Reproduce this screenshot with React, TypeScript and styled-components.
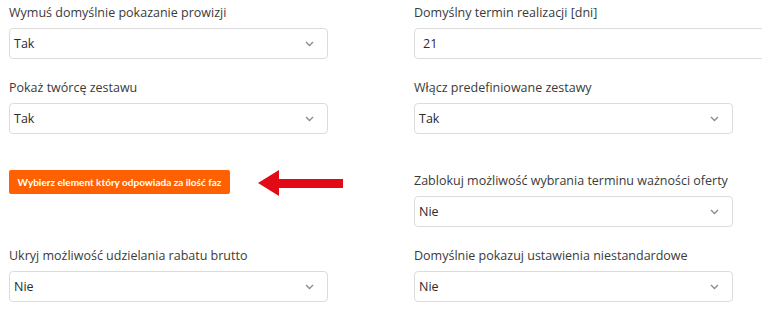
import styled, { createGlobalStyle } from 'styled-components';

const GlobalStyle = createGlobalStyle`
    body {
        margin: 0;
        background: #ffffff;
        font-family: "Open Sans", "Liberation Sans", sans-serif;
        color: #333333;
    }
`

const Page = styled.div`
    display: flex;
    flex-direction: column;
    gap: 20px;
    padding: 4px 0 0 9px;
    width: 762px;
    height: 314px;
    box-sizing: border-box;
    overflow: hidden;
`

const Row = styled.div<{ $offset?: number }>`
    display: grid;
    grid-template-columns: 319px 319px;
    column-gap: 86px;
    margin-top: ${p => p.$offset || 0}px;
`

const Field = styled.div`
    display: flex;
    flex-direction: column;
    gap: 6px;
`

const Label = styled.label`
    font-size: 12.5px;
    line-height: 18px;
    color: #3a3a3a;
`

const Control = styled.div<{ $wide?: boolean }>`
    display: flex;
    align-items: center;
    justify-content: space-between;
    height: 31px;
    width: ${p => (p.$wide ? '380px' : '100%')};
    box-sizing: border-box;
    padding: 0 13px 0 4px;
    border: 1px solid #dcdcdc;
    border-radius: 4px;
    font-size: 12.5px;
    color: #2b2b2b;
`

const Value = styled.span<{ $pad?: number }>`
    padding-left: ${p => p.$pad || 0}px;
`

const Cell = styled.div`
    display: flex;
    align-items: flex-start;
    gap: 28px;
    margin-top: -2px;
`

const OrangeButton = styled.button`
    flex-shrink: 0;
    height: 24px;
    width: 221px;
    padding: 0;
    border: none;
    border-radius: 2px;
    background: #ff6100;
    color: #ffffff;
    font-family: Lato, "Open Sans", sans-serif;
    font-size: 10px;
    font-weight: 700;
    white-space: nowrap;
`

const Arrow = styled.svg`
    display: block;
    flex-shrink: 0;
`

function Chevron() {
    return (
        <svg width="9" height="6" viewBox="0 0 9 6">
            <path d="M1 1 L4.5 4.5 L8 1" fill="none" stroke="#8a8a8a" strokeWidth="1.3" />
        </svg>
    )
}

function Select({ value }: { value: string }) {
    return (
        <Control>
            <Value>{value}</Value>
            <Chevron />
        </Control>
    )
}

export default function App() {
    return (
        <>
            <GlobalStyle />
            <Page>
                <Row>
                    <Field>
                        <Label>Wymuś domyślnie pokazanie prowizji</Label>
                        <Select value="Tak" />
                    </Field>
                    <Field>
                        <Label>Domyślny termin realizacji [dni]</Label>
                        <Control $wide>
                            <Value $pad={4}>21</Value>
                        </Control>
                    </Field>
                </Row>
                <Row>
                    <Field>
                        <Label>Pokaż twórcę zestawu</Label>
                        <Select value="Tak" />
                    </Field>
                    <Field>
                        <Label>Włącz predefiniowane zestawy</Label>
                        <Select value="Tak" />
                    </Field>
                </Row>
                <Row $offset={18}>
                    <Cell>
                        <OrangeButton>Wybierz element który odpowiada za ilość faz</OrangeButton>
                        <Arrow width="86" height="26" viewBox="0 0 86 26">
                            <path d="M0 13 L21 0 L21 9 L85 9 L85 18 L21 18 L21 26 Z" fill="#e20a17" />
                        </Arrow>
                    </Cell>
                    <Field>
                        <Label>Zablokuj możliwość wybrania terminu ważności oferty</Label>
                        <Select value="Nie" />
                    </Field>
                </Row>
                <Row>
                    <Field>
                        <Label>Ukryj możliwość udzielania rabatu brutto</Label>
                        <Select value="Nie" />
                    </Field>
                    <Field>
                        <Label>Domyślnie pokazuj ustawienia niestandardowe</Label>
                        <Select value="Nie" />
                    </Field>
                </Row>
            </Page>
        </>
    )
}
